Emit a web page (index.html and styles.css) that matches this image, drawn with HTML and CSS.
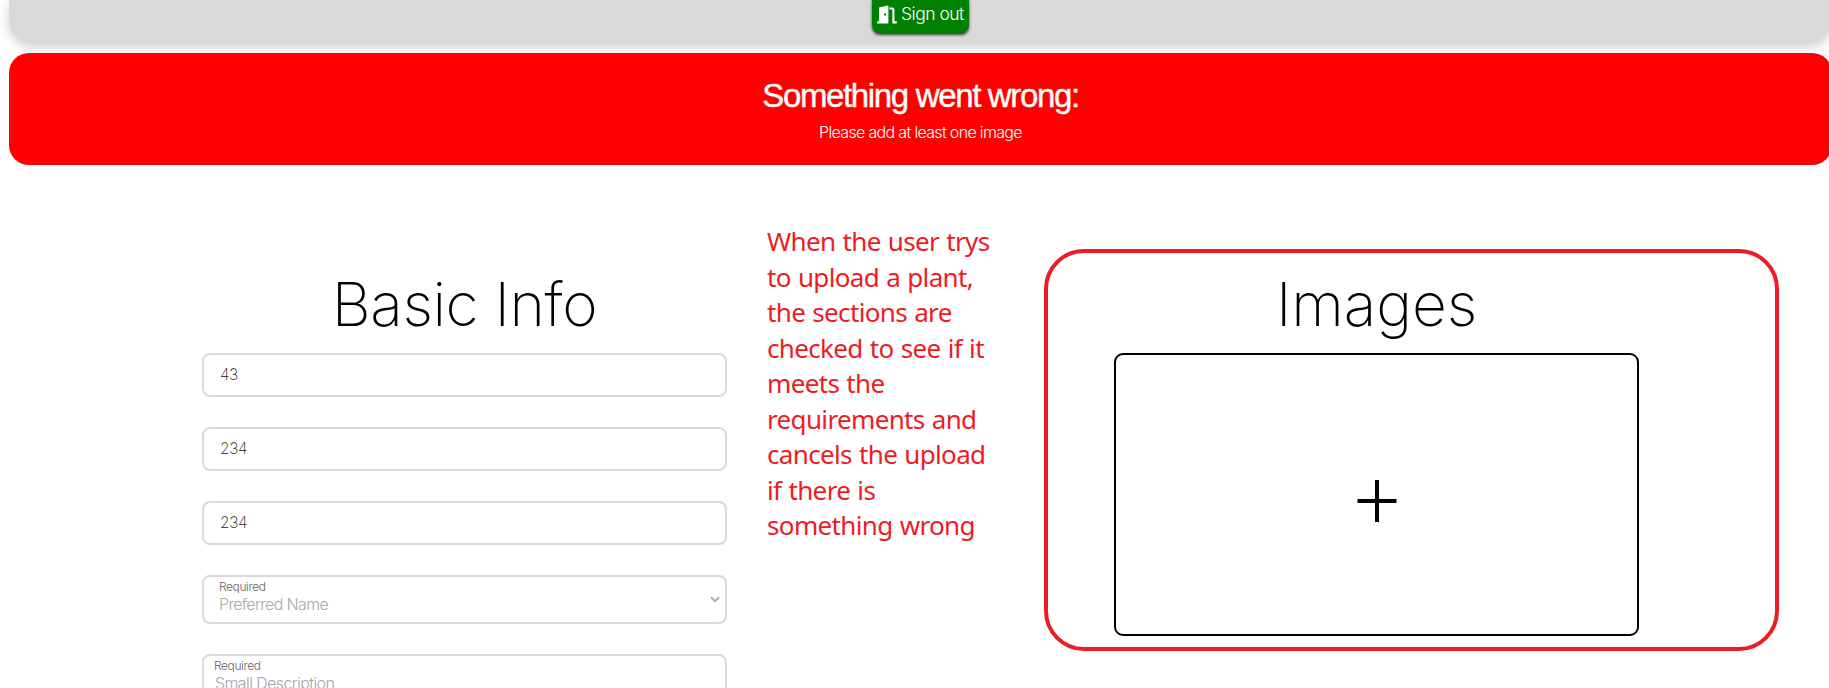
FILE: index.html
```html
<!DOCTYPE html>
<html lang="en">
<head>
<meta charset="utf-8">
<title>Upload plant</title>
<link rel="stylesheet" href="styles.css">
</head>
<body>
<header class="topbar">
  <button class="sign-out" type="button">
    <svg class="door" viewBox="0 0 20 19" width="20" height="19" aria-hidden="true">
      <path fill="#fff" fill-rule="evenodd" d="M2 2.5 10.6.4Q11.4.3 11.4 1.1V18.5H.3V16.3H2ZM8 8.2a1 1.3 0 1 0 0 2.6 1 1.3 0 0 0 0-2.6Z"/>
      <path fill="none" stroke="#fff" stroke-width="2.1" d="M12.5 3.5H15Q16.4 3.5 16.4 5V17.4H19.8"/>
    </svg>
    <span class="sign-out-text">Sign out</span>
  </button>
</header>
<section class="alert">
  <h2 class="alert-title">Something went wrong:</h2>
  <p class="alert-text">Please add at least one image</p>
</section>
<main class="content">
  <section class="info">
    <h1 class="heading"><span class="basic">Basic Info</span></h1>
    <div class="field"><span class="value">43</span></div>
    <div class="field"><span class="value">234</span></div>
    <div class="field"><span class="value">234</span></div>
    <div class="field select">
      <div>
        <div class="label">Required</div>
        <div class="placeholder name">Preferred Name</div>
      </div>
      <svg class="chevron" viewBox="0 0 10 7" width="10" height="7" aria-hidden="true"><path d="M1 1.2 5 5.2 9 1.2" fill="none" stroke="#a9adb0" stroke-width="2"/></svg>
    </div>
    <div class="field area">
      <div class="label">Required</div>
      <div class="placeholder description">Small Description</div>
    </div>
  </section>
  <p class="note">When the user trys<br>to upload a plant,<br>the sections are<br>checked to see if it<br>meets the<br>requirements and<br>cancels the upload<br>if there is<br>something wrong</p>
  <section class="images">
    <h1 class="heading"><span class="imgs">Images</span></h1>
    <div class="dropzone">
      <svg viewBox="0 0 40 42" width="40" height="42" aria-hidden="true"><path d="M0.5 21H39.5M20 0V42" stroke="#000" stroke-width="4" fill="none"/></svg>
    </div>
  </section>
</main>
</body>
</html>
```
FILE: styles.css
```css
* { box-sizing: border-box; }
html, body { margin: 0; height: 688px; overflow: hidden; }
body { background: #fff; font-family: Inter, "Liberation Sans", sans-serif; font-weight: 300; color: #000; }
h1, h2, p { margin: 0; font-weight: inherit; }

.topbar {
  height: 43px; margin: 0 -3px 0 9px; background: #d9d9d9;
  border-radius: 0 0 24px 24px; box-shadow: 0 4px 12px rgba(0, 0, 0, .2);
  display: flex; justify-content: center; align-items: flex-end; padding-bottom: 10px;
}
.sign-out {
  width: 97px; height: 40px; padding: 0 5px 9px; border: 0; border-radius: 8px;
  background: #008000; color: #fff; box-shadow: 0 2px 3px rgba(0, 0, 0, .75);
  display: flex; align-items: flex-end; gap: 4px; font: inherit;
}
.door { flex: none; }
.sign-out-text { font-size: 17.5px; line-height: 20px; letter-spacing: -.5px; white-space: nowrap; }

.alert {
  position: relative; height: 112px; margin: 10px -3px 0 9px; padding-top: 23px;
  border-radius: 20px; background: #f00; color: #fff; text-align: center;
}
.alert-title { font: 400 33px/40px "Liberation Sans", sans-serif; letter-spacing: -1.35px; -webkit-text-stroke: .4px #fff; }
.alert-text { font-size: 16px; line-height: 20px; margin-top: 6px; letter-spacing: -.67px; }

.content { display: grid; grid-template-columns: 525px 237px 735px; column-gap: 40px; padding: 58px 0 0 202px; align-items: start; }
.info { padding-top: 30px; }
.heading { width: 525px; height: 100px; text-align: center; font-size: 60.5px; font-weight: 200; line-height: 102px; white-space: nowrap; }
.basic { letter-spacing: -.5px; }
.imgs { letter-spacing: -.1px; }

.field { height: 44px; margin-bottom: 30px; border: 2px solid #d9d9d9; border-radius: 8px; display: flex; align-items: center; padding-left: 16px; }
.value { font-size: 15.5px; color: #222; font-weight: 200; letter-spacing: -.4px; line-height: 20px; }
.select { height: 49px; justify-content: space-between; padding: 0 5px 0 15px; align-items: flex-start; }
.label { font-size: 12px; line-height: 14px; color: #666; letter-spacing: -.4px; margin-top: 3px; }
.placeholder { font-size: 16px; line-height: 20px; white-space: nowrap; color: #a9a9a9; letter-spacing: -.65px; }
.select .chevron { margin-top: 19px; }
.area { height: 90px; display: block; padding-left: 10px; }
.area .placeholder { color: #a0a4b0; padding-left: 1px; letter-spacing: -.6px; }

.note { padding-top: 1px; color: #ed1c24; font: 400 26px/35.5px "Noto Sans", "Open Sans", sans-serif; letter-spacing: -.65px; word-spacing: 1px; white-space: nowrap; }
.images { width: 735px; height: 402px; margin-top: 26px; border: 4px solid #ed1c24; border-radius: 40px; padding: 0 66px; }
.dropzone { height: 283px; width: 525px; border: 2px solid #000; border-radius: 9px; display: grid; place-items: center; padding-top: 13px; }
```
